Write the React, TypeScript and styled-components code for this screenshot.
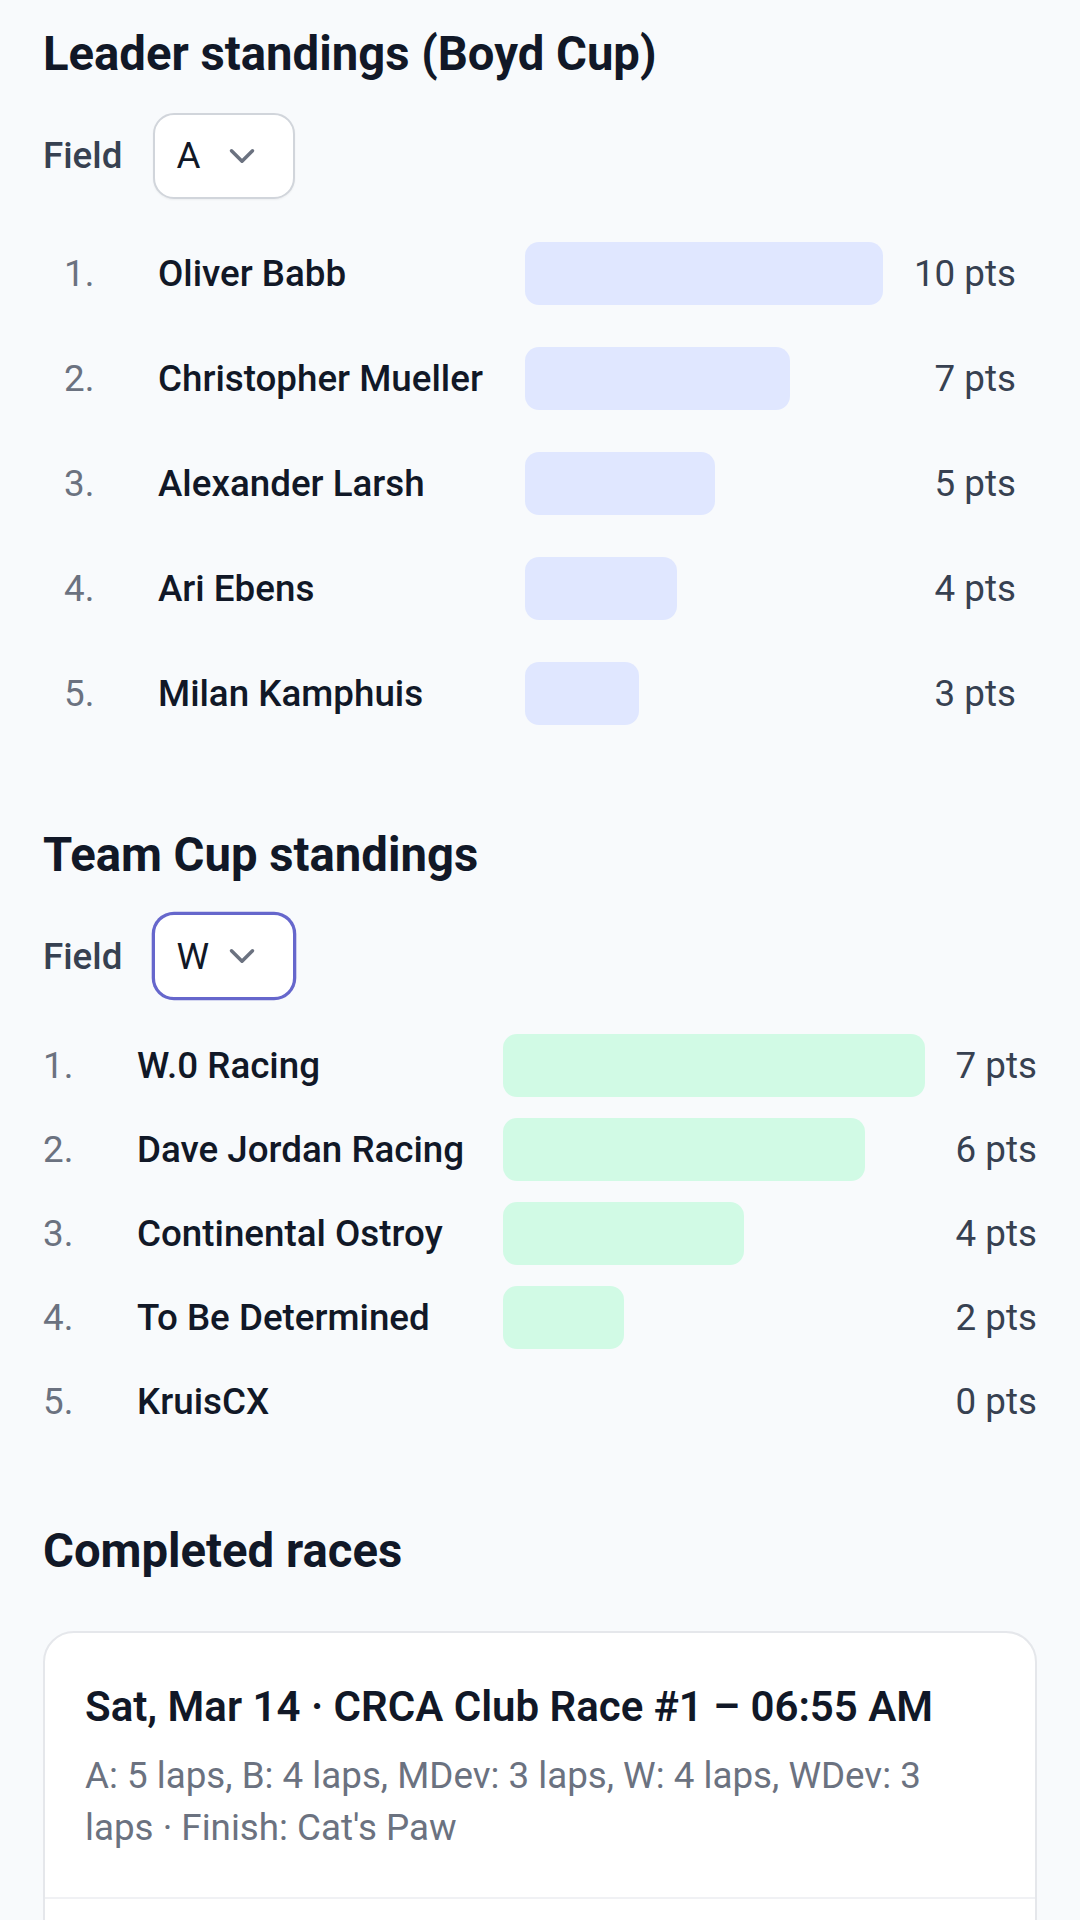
import React from "react";
import styled, { createGlobalStyle } from "styled-components";
import { ChevronDown } from "lucide-react";

const GlobalStyle = createGlobalStyle`
    html, body {
        margin: 0;
        padding: 0;
        background: #f8fafc;
    }
    body {
        font-family: Roboto, "Liberation Sans", Arial, sans-serif;
        color: #111827;
        -webkit-font-smoothing: antialiased;
    }
    * {
        box-sizing: border-box;
    }
`;

const Page = styled.main`
    padding: 18px 43px 0;
`;

const Section = styled.section<{ $after: number }>`
    margin-bottom: ${(p) => p.$after}px;
`;

const Heading = styled.h2`
    margin: 0 0 21px;
    font-size: 47.25px;
    line-height: 73.5px;
    font-weight: 700;
    color: #111827;
`;

const FieldRow = styled.div`
    display: flex;
    align-items: center;
    gap: 31px;
`;

const FieldLabel = styled.span`
    font-size: 36.75px;
    font-weight: 500;
    color: #374151;
`;

const Select = styled.div<{ $focused?: boolean }>`
    display: inline-flex;
    align-items: center;
    justify-content: space-between;
    width: 142px;
    height: 86px;
    padding: 0 30px 0 21px;
    background: #ffffff;
    border: 2.6px solid ${(p) => (p.$focused ? "#6667cc" : "#d1d5db")};
    border-radius: 21px;
    box-shadow: ${(p) => (p.$focused ? "0 0 0 1.3px #6667cc" : "0 1px 2px rgba(0, 0, 0, 0.05)")};
    font-size: 36.75px;
    color: #111827;
`;

const List = styled.ol<{ $inset: number; $top: number; $gap: number }>`
    list-style: none;
    margin: ${(p) => p.$top}px 0 0;
    padding: 0 ${(p) => p.$inset}px;
    display: flex;
    flex-direction: column;
    gap: ${(p) => p.$gap}px;
`;

const Row = styled.li<{ $cols: string; $pad: number }>`
    display: grid;
    grid-template-columns: ${(p) => p.$cols};
    align-items: center;
    padding: ${(p) => p.$pad}px 0;
    font-size: 36.75px;
`;

const Rank = styled.span`
    color: #6b7280;
`;

const Name = styled.span`
    font-weight: 500;
    color: #111827;
    white-space: nowrap;
`;

const Track = styled.div`
    height: 63px;
    display: flex;
`;

const Bar = styled.div<{ $tone: string }>`
    height: 100%;
    max-width: 100%;
    border-radius: 14px;
    background: ${(p) => p.$tone};
`;

const Points = styled.span`
    justify-self: end;
    color: #374151;
    white-space: nowrap;
`;

const Card = styled.div`
    margin-top: 42px;
    background: #ffffff;
    border: 2.6px solid #e5e7eb;
    border-radius: 31px;
    overflow: hidden;
`;

const RaceItem = styled.div`
    padding: 42px 40px 42px;
    border-bottom: 2.6px solid #f0f1f4;
`;

const RaceTitle = styled.div`
    font-size: 42px;
    line-height: 63px;
    font-weight: 600;
    color: #111827;
`;

const RaceMeta = styled.div`
    margin-top: 12px;
    font-size: 36.75px;
    line-height: 52.5px;
    color: #6b7280;
`;

type Standing = { name: string; pts: number };

const leaders: Standing[] = [
    { name: "Oliver Babb", pts: 10 },
    { name: "Christopher Mueller", pts: 7 },
    { name: "Alexander Larsh", pts: 5 },
    { name: "Ari Ebens", pts: 4 },
    { name: "Milan Kamphuis", pts: 3 },
];

const teams: Standing[] = [
    { name: "W.0 Racing", pts: 7 },
    { name: "Dave Jordan Racing", pts: 6 },
    { name: "Continental Ostroy", pts: 4 },
    { name: "To Be Determined", pts: 2 },
    { name: "KruisCX", pts: 0 },
];

const races = [
    {
        title: "Sat, Mar 14 · CRCA Club Race #1 – 06:55 AM",
        meta: "A: 5 laps, B: 4 laps, MDev: 3 laps, W: 4 laps, WDev: 3 laps · Finish: Cat's Paw",
    },
    {
        title: "Sat, Mar 7 · CRCA Club Race – 06:55 AM",
        meta: "A: 5 laps, B: 4 laps, W: 4 laps · Finish: Cat's Paw",
    },
];

type ListProps = {
    rows: Standing[];
    cols: string;
    unit: number;
    tone: string;
    inset: number;
    top: number;
    gap: number;
    pad: number;
};

const StandingsList = ({ rows, cols, unit, tone, inset, top, gap, pad }: ListProps) => (
    <List $inset={inset} $top={top} $gap={gap}>
        {rows.map((r, i) => (
            <Row key={r.name} $cols={cols} $pad={pad}>
                <Rank>{i + 1}.</Rank>
                <Name>{r.name}</Name>
                <Track>
                    {r.pts > 0 && <Bar $tone={tone} style={{ width: `${r.pts * unit}px` }} />}
                </Track>
                <Points>{r.pts} pts</Points>
            </Row>
        ))}
    </List>
);

const App = () => {
    return (
        <>
            <GlobalStyle />
            <Page>
                <Section $after={73}>
                    <Heading>Leader standings (Boyd Cup)</Heading>
                    <FieldRow>
                        <FieldLabel>Field</FieldLabel>
                        <Select>
                            A
                            <ChevronDown size={42} strokeWidth={2} color="#6b7280" />
                        </Select>
                    </FieldRow>
                    <StandingsList
                        rows={leaders}
                        cols="94px 367px 358px 1fr"
                        unit={37.9}
                        tone="#e0e7ff"
                        inset={21}
                        top={22}
                        gap={0}
                        pad={21}
                    />
                </Section>

                <Section $after={82}>
                    <Heading>Team Cup standings</Heading>
                    <FieldRow>
                        <FieldLabel>Field</FieldLabel>
                        <Select $focused>
                            W
                            <ChevronDown size={42} strokeWidth={2} color="#6b7280" />
                        </Select>
                    </FieldRow>
                    <StandingsList
                        rows={teams}
                        cols="94px 366px 422px 1fr"
                        unit={60.3}
                        tone="#d1fae5"
                        inset={0}
                        top={35}
                        gap={21}
                        pad={0}
                    />
                </Section>

                <Section $after={0}>
                    <Heading>Completed races</Heading>
                    <Card>
                        {races.map((race) => (
                            <RaceItem key={race.title}>
                                <RaceTitle>{race.title}</RaceTitle>
                                <RaceMeta>{race.meta}</RaceMeta>
                            </RaceItem>
                        ))}
                    </Card>
                </Section>
            </Page>
        </>
    );
};

export default App;
